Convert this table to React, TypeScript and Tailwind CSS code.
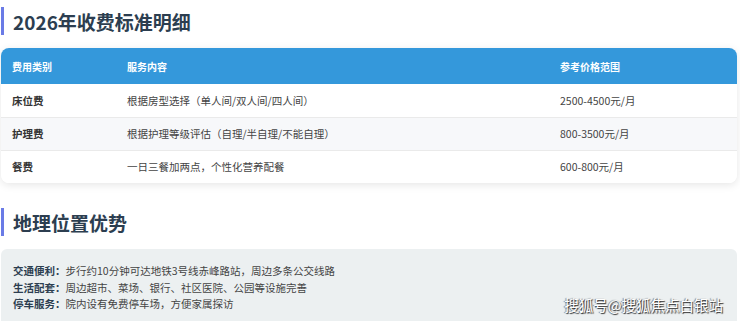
import React from "react";

// --- Data ---

const feeRows = [
	{ type: "床位费", content: "根据房型选择（单人间/双人间/四人间）", price: "2500-4500元/月" },
	{ type: "护理费", content: "根据护理等级评估（自理/半自理/不能自理）", price: "800-3500元/月" },
	{ type: "餐费", content: "一日三餐加两点，个性化营养配餐", price: "600-800元/月" },
];

const locationItems = [
	{ label: "交通便利：", text: "步行约10分钟可达地铁3号线赤峰路站，周边多条公交线路" },
	{ label: "生活配套：", text: "周边超市、菜场、银行、社区医院、公园等设施完善" },
	{ label: "停车服务：", text: "院内设有免费停车场，方便家属探访" },
];

const font = "font-['Noto_Sans_CJK_SC','Noto_Sans',sans-serif]";

// --- Sub-Components ---

const SectionTitle = ({ children }: { children: React.ReactNode }) => (
	<div className="flex h-[28px] items-center border-l-[3px] border-[#6a7be6] pl-[9px]">
		<h2 className="text-[19px] leading-none font-bold text-[#2c3e50]">{children}</h2>
	</div>
);

// --- Page ---

export default function App() {
	return (
		<div className={`${font} h-[321px] w-[740px] overflow-hidden bg-white pr-[3px] pl-[1px]`}>
			<div className="pt-[7px]">
				<SectionTitle>2026年收费标准明细</SectionTitle>
			</div>

			{/* Fee table */}
			<div className="mt-[13px] overflow-hidden rounded-[8px] bg-white shadow-[0_2px_8px_rgba(0,0,0,0.1)]">
				<div className="grid h-[36px] grid-cols-[115px_433px_1fr] items-center bg-[#3498db] px-[11px] text-[10px] font-bold text-white">
					<span>费用类别</span>
					<span>服务内容</span>
					<span>参考价格范围</span>
				</div>
				{feeRows.map((row, idx) => (
					<div
						key={row.type}
						className={`grid h-[33px] grid-cols-[115px_433px_1fr] items-center px-[11px] text-[10.5px] text-[#444] ${
							idx > 0 ? "border-t border-[#eaeaea]" : ""
						} ${idx === 1 ? "bg-[#f7f8fa]" : "bg-white"}`}
					>
						<span className="font-bold text-[#333]">{row.type}</span>
						<span>{row.content}</span>
						<span>{row.price}</span>
					</div>
				))}
			</div>

			<div className="mt-[25px]">
				<SectionTitle>地理位置优势</SectionTitle>
			</div>

			{/* Location box */}
			<div className="relative mt-[13px] h-[90px] rounded-[6px] bg-[#ecf0f1] px-[12px] pt-[14px]">
				{locationItems.map((item) => (
					<p key={item.label} className="text-[10.5px] leading-[16.5px] text-[#444]">
						<span className="font-bold text-[#2c3e50]">{item.label}</span>
						{item.text}
					</p>
				))}
				<span className="absolute top-[45px] right-[14px] text-[14.5px] text-white [text-shadow:1px_1px_1px_rgba(0,0,0,0.8),-1px_0_1px_rgba(0,0,0,0.5)]">
					搜狐号@搜狐焦点白银站
				</span>
			</div>
		</div>
	);
}
